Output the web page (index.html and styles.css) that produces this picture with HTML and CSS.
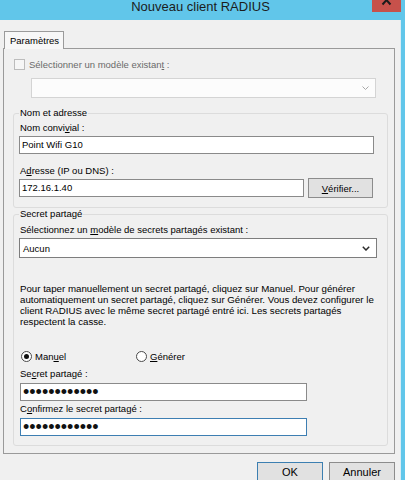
FILE: index.html
```html
<!DOCTYPE html>
<html lang="fr">
<head>
<meta charset="utf-8">
<title>Nouveau client RADIUS</title>
<link rel="stylesheet" href="styles.css">
</head>
<body>
<div class="window">
  <div class="titlebar">
    <div class="title">Nouveau client RADIUS</div>
    <div class="close"><svg width="29" height="12" viewBox="0 0 29 12"><path d="M10.5 -4.5 L18.5 4.5 M18.5 -4.5 L10.5 4.5" stroke="#1b1b1b" stroke-width="2"/></svg></div>
  </div>
  <div class="client">
    <div class="tabs"><div class="tab">Paramètres</div></div>
    <div class="panel">
      <div class="check-row"><span class="checkbox"></span><span>Sélectionner un modèle existan<u>t</u> :</span></div>
      <div class="combo combo-disabled"><span></span><svg class="chev" width="7" height="4" viewBox="0 0 7 4"><path d="M0.5 0.5 L3.5 3.5 L6.5 0.5" fill="none" stroke="#a8a8a8" stroke-width="1"/></svg></div>
      <fieldset class="group group-name">
        <legend>Nom et adresse</legend>
        <div class="label label-first">Nom convi<u>v</u>ial :</div>
        <div class="field field-name">Point Wifi G10</div>
        <div class="label label-next">A<u>d</u>resse (IP ou DNS) :</div>
        <div class="field-row">
          <div class="field field-addr">172.16.1.40</div>
          <div class="button btn-verify"><span><u>V</u>érifier...</span></div>
        </div>
      </fieldset>
      <fieldset class="group group-secret">
        <legend>Secret partagé</legend>
        <div class="label label-first2">Sélectionnez un <u>m</u>odèle de secrets partagés existant :</div>
        <div class="combo combo-select"><span>Aucun</span><svg class="chev" width="8" height="5" viewBox="0 0 8 5"><path d="M0.8 0.8 L4 4 L7.2 0.8" fill="none" stroke="#2b2b2b" stroke-width="1.5"/></svg></div>
        <p class="note">Pour taper manuellement un secret partagé, cliquez sur Manuel. Pour générer<br>automatiquement un secret partagé, cliquez sur Générer. Vous devez configurer le<br>client RADIUS avec le même secret partagé entré ici. Les secrets partagés<br>respectent la casse.</p>
        <div class="radio-row">
          <div class="radio-opt opt-manual"><span class="radio radio-on"></span><span>Man<u>u</u>el</span></div>
          <div class="radio-opt opt-gen"><span class="radio"></span><span><u>G</u>énérer</span></div>
        </div>
        <div class="label label-secret">Se<u>c</u>ret partagé :</div>
        <div class="field field-secret"><span class="dots">••••••••••••</span></div>
        <div class="label label-confirm">C<u>o</u>nfirmez le secret partagé :</div>
        <div class="field field-secret field-focus"><span class="dots">••••••••••••</span></div>
      </fieldset>
    </div>
    <div class="buttons">
      <div class="button btn-dialog btn-default"><span>OK</span></div>
      <div class="button btn-dialog"><span>Annuler</span></div>
    </div>
  </div>
</div>
</body>
</html>
```

FILE: styles.css
```css
* { box-sizing: border-box; }
html, body { margin: 0; padding: 0; }
body {
  width: 405px;
  height: 480px;
  overflow: hidden;
  background: #61c6ea;
  font-family: "Liberation Sans", Arial, sans-serif;
  font-size: 9.5px;
  color: #000;
}
u { text-decoration-thickness: 1px; text-underline-offset: 1px; }
.window { display: flex; flex-direction: column; height: 480px; }
.titlebar {
  height: 20px;
  flex: none;
  display: flex;
  align-items: flex-start;
  padding-left: 29px;
  padding-right: 4px;
}
.title {
  flex: 1;
  text-align: center;
  font-size: 13px;
  line-height: 13px;
  color: #1c1c1c;
}
.close {
  width: 29px;
  height: 12px;
  background: #c7514b;
  display: flex;
}
.client {
  flex: 1;
  background: #f0f0f0;
  margin-right: 4px;
  border-right: 1px solid #d8ecf5;
  padding: 11px 0 0 3px;
  display: flex;
  flex-direction: column;
}
.tabs { display: flex; padding-left: 1px; }
.tab {
  position: relative;
  z-index: 1;
  width: 60px;
  height: 18px;
  margin-bottom: -1px;
  border: 1px solid #9a9a9a;
  border-bottom: none;
  background: #f7f7f7;
  padding: 2px 0 0 5px;
  line-height: 13px;
}
.panel {
  width: 392px;
  border: 1px solid #9a9a9a;
  padding: 9px 0 7px 0;
}
.check-row {
  display: flex;
  align-items: center;
  gap: 4px;
  margin-left: 10px;
  height: 13px;
  line-height: 13px;
  color: #6a6a6a;
}
.checkbox {
  width: 11px;
  height: 11px;
  border: 1px solid #bcbcbc;
  background: #f6f6f6;
}
.combo {
  height: 20px;
  display: flex;
  align-items: center;
  justify-content: space-between;
  background: #fff;
  padding: 0 6px 0 2px;
}
.combo-disabled {
  margin: 7px 0 0 27px;
  width: 345px;
  border: 1px solid #d4d4d4;
  background: #fcfcfc;
}
.group {
  margin: 9px 0 0 9px;
  width: 375px;
  min-width: 0;
  border: 1px solid #dcdcdc;
  border-radius: 3px;
  padding: 0 0 9px 5px;
}
.group legend {
  padding: 0 1px;
  line-height: 12px;
  font-size: 9.5px;
}
.group-secret { margin-top: 0; }
.label { line-height: 13px; padding-left: 1px; }
.label-first { margin-top: 2px; }
.label-next { margin-top: 10px; }
.label-first2 { margin-top: 3px; }
.label-secret { margin-top: 4px; }
.label-confirm { margin-top: 1px; }
.field {
  height: 18px;
  border: 1px solid #8a8a8a;
  background: #fff;
  padding: 0 2px;
  display: flex;
  align-items: center;
  white-space: nowrap;
  line-height: 14px;
}
.field-name { width: 355px; margin-top: 2px; }
.field-row {
  display: flex;
  align-items: center;
  gap: 4px;
  height: 20px;
  margin-top: 1px;
}
.field-addr { width: 285px; }
.button {
  height: 20px;
  border: 1px solid #8c8c8c;
  background: #e1e1e1;
  display: flex;
  align-items: center;
  justify-content: center;
  line-height: 13px;
}
.btn-verify { width: 65px; }
.combo-select {
  margin-top: 2px;
  width: 358px;
  border: 1px solid #7d7d7d;
  padding-left: 3px;
}
.note {
  margin: 25px 0 0 0;
  padding-left: 1px;
  font-size: 9.7px;
  line-height: 11px;
  white-space: nowrap;
}
.radio-row {
  display: flex;
  margin-top: 23px;
  height: 13px;
  line-height: 13px;
  padding-left: 2px;
}
.radio-opt { display: flex; align-items: center; gap: 3px; }
.opt-manual { width: 115px; }
.radio {
  width: 11px;
  height: 11px;
  border-radius: 50%;
  border: 1px solid #4a4a4a;
  background: #fff;
  display: flex;
  align-items: center;
  justify-content: center;
}
.radio-on::after {
  content: "";
  width: 5px;
  height: 5px;
  border-radius: 50%;
  background: #111;
}
.field-secret { width: 287px; margin: 3px 0 0 1px; }
.dots {
  font-size: 18px;
  line-height: 16px;
  color: #111;
}
.field-focus { border-color: #3d7eb2; }
.buttons {
  display: flex;
  justify-content: flex-end;
  gap: 6px;
  margin-top: 8px;
  padding-right: 5px;
}
.btn-dialog { width: 66px; height: 21px; font-size: 11px; }
.btn-default { border-color: #3c7fb1; }
```
